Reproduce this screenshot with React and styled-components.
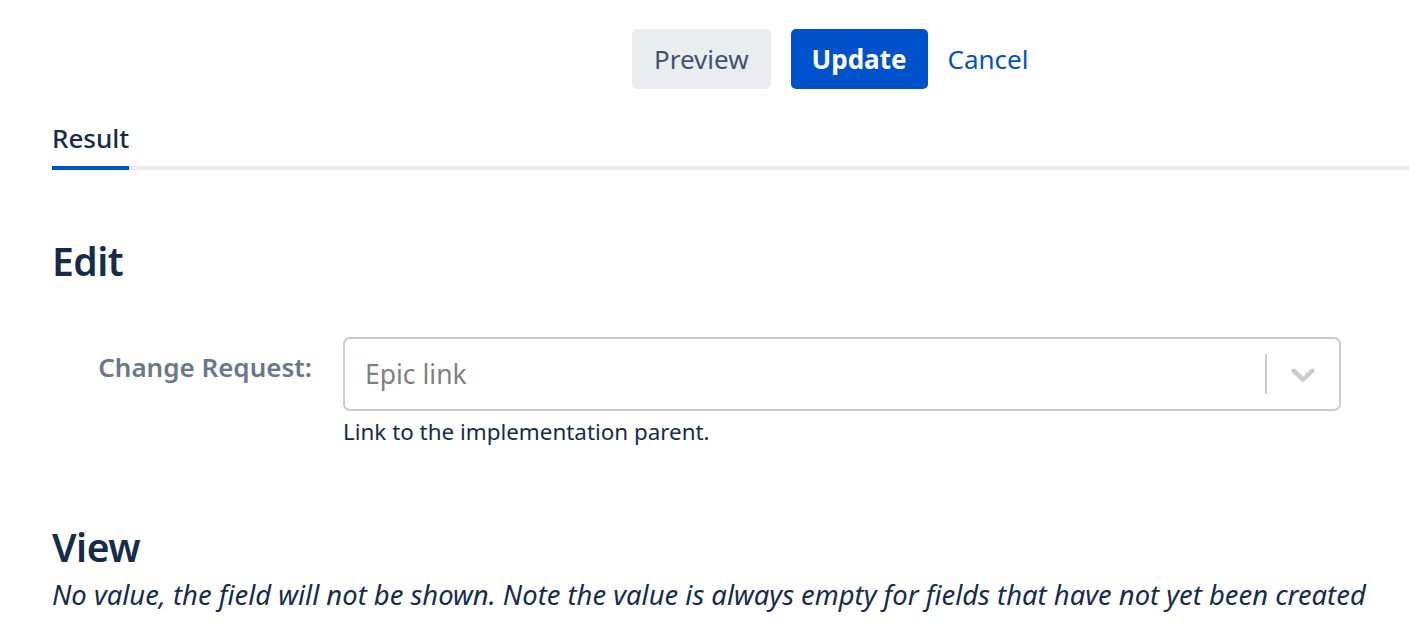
import React from "react";
import styled, { createGlobalStyle } from "styled-components";

const Global = createGlobalStyle`
  html, body { margin: 0; padding: 0; background: #fff; }
  body { font-family: "Noto Sans", "Open Sans", sans-serif; color: #172B4D; }
`;

const Page = styled.div`
  width: 1409px;
  height: 644px;
  overflow: hidden;
  padding-left: 52px;
  box-sizing: border-box;
`;

const Toolbar = styled.div`
  display: flex;
  align-items: center;
  gap: 20px;
  padding-top: 29px;
  padding-left: 580px;
`;

const Button = styled.button`
  height: 60px;
  border: none;
  border-radius: 5px;
  padding: 0 ${(p) => (p.$variant === "link" ? "0" : p.$variant === "primary" ? "21px" : "22px")};
  font-family: inherit;
  font-size: 26px;
  font-weight: ${(p) => (p.$variant === "primary" ? 700 : 400)};
  background: ${(p) =>
    p.$variant === "primary" ? "#0052CC" : p.$variant === "link" ? "transparent" : "#EBECF0"};
  color: ${(p) =>
    p.$variant === "primary" ? "#FFFFFF" : p.$variant === "link" ? "#0052CC" : "#42526E"};
  cursor: pointer;
`;

const TabBar = styled.div`
  margin-top: 31px;
  display: flex;
  border-bottom: 4px solid #EBECF0;
`;

const Tab = styled.div`
  font-size: 26px;
  font-weight: 500;
  color: #172B4D;
  padding-bottom: 10px;
  margin-bottom: -4px;
  border-bottom: 4px solid ${(p) => (p.$active ? "#0052CC" : "transparent")};
`;

const Heading = styled.h2`
  margin: ${(p) => p.$top}px 0 0 0;
  font-size: 39px;
  font-weight: 600;
  letter-spacing: -0.5px;
  color: #172B4D;
  line-height: 1.2;
`;

const FieldRow = styled.div`
  display: grid;
  grid-template-columns: 260px 998px;
  column-gap: 31px;
  margin-top: 52px;
`;

const Label = styled.label`
  text-align: right;
  font-size: 26px;
  font-weight: 600;
  color: #6B778C;
  padding-top: 12px;
`;

const Control = styled.div`
  height: 74px;
  box-sizing: border-box;
  border: 2px solid #CCCCCC;
  border-radius: 7px;
  display: flex;
  align-items: center;
`;

const Placeholder = styled.div`
  flex: 1;
  padding-left: 20px;
  font-size: 26.5px;
  color: #808080;
`;

const Separator = styled.span`
  width: 2px;
  height: 40px;
  background: #CCCCCC;
`;

const Indicator = styled.div`
  width: 72px;
  display: flex;
  justify-content: center;
  align-items: center;
  color: #CCCCCC;
`;

const Help = styled.div`
  grid-column: 2;
  margin-top: 5px;
  font-size: 22.4px;
  color: #172B4D;
`;

const Note = styled.p`
  margin: 5px 0 0 0;
  font-size: 27.4px;
  font-style: italic;
  color: #172B4D;
`;

export default function App() {
  return (
    <Page>
      <Global />
      <Toolbar>
        <Button>Preview</Button>
        <Button $variant="primary">Update</Button>
        <Button $variant="link">Cancel</Button>
      </Toolbar>
      <TabBar>
        <Tab $active>Result</Tab>
      </TabBar>
      <Heading $top={68}>Edit</Heading>
      <FieldRow>
        <Label>Change Request:</Label>
        <Control>
          <Placeholder>Epic link</Placeholder>
          <Separator />
          <Indicator>
            <svg width="40" height="40" viewBox="0 0 20 20" fill="currentColor">
              <path d="M4.516 7.548c0.436-0.446 1.043-0.481 1.576 0l3.908 3.747 3.908-3.747c0.533-0.481 1.141-0.446 1.574 0 0.436 0.445 0.408 1.197 0 1.615-0.406 0.418-4.695 4.502-4.695 4.502-0.217 0.223-0.502 0.335-0.787 0.335s-0.57-0.112-0.789-0.335c0 0-4.287-4.084-4.695-4.502s-0.436-1.17 0-1.615z" />
            </svg>
          </Indicator>
        </Control>
        <Help>Link to the implementation parent.</Help>
      </FieldRow>
      <Heading $top={77}>View</Heading>
      <Note>No value, the field will not be shown. Note the value is always empty for fields that have not yet been created</Note>
    </Page>
  );
}
